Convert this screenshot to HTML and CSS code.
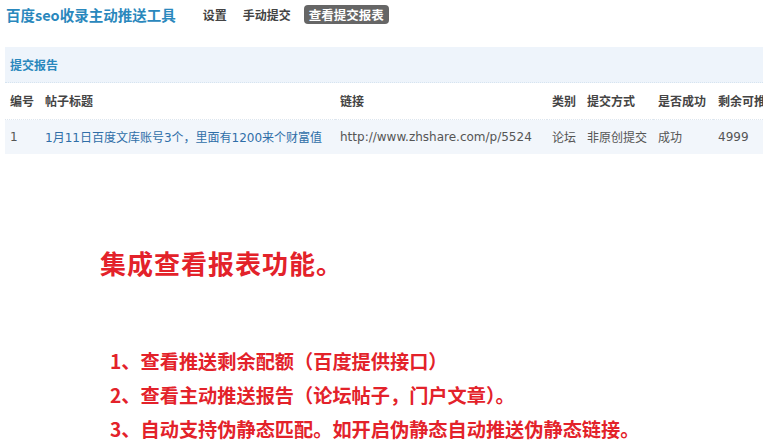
FILE: index.html
```html
<!DOCTYPE html>
<html lang="zh-CN">
<head>
    <meta charset="UTF-8">
    <title>百度seo收录主动推送工具</title>
    <link rel="stylesheet" href="styles.css">
</head>
<body>
    <div class="topbar">
        <span class="app-title">百度seo收录主动推送工具</span>
        <a class="nav-item">设置</a>
        <a class="nav-item">手动提交</a>
        <a class="nav-item active">查看提交报表</a>
    </div>

    <div class="panel">
        <div class="panel-head">提交报告</div>
        <table class="report">
            <colgroup>
                <col style="width:35px">
                <col style="width:295px">
                <col style="width:212px">
                <col style="width:35px">
                <col style="width:71px">
                <col style="width:60px">
                <col style="width:100px">
            </colgroup>
            <thead>
                <tr>
                    <th>编号</th>
                    <th>帖子标题</th>
                    <th>链接</th>
                    <th>类别</th>
                    <th>提交方式</th>
                    <th>是否成功</th>
                    <th>剩余可推送</th>
                </tr>
            </thead>
            <tbody>
                <tr>
                    <td>1</td>
                    <td><a class="post-link">1月11日百度文库账号3个，里面有1200来个财富值</a></td>
                    <td>http://www.zhshare.com/p/5524</td>
                    <td>论坛</td>
                    <td>非原创提交</td>
                    <td>成功</td>
                    <td>4999</td>
                </tr>
            </tbody>
        </table>
    </div>

    <div class="notes">
        <h2>集成查看报表功能。</h2>
        <ol class="features">
            <li>1、查看推送剩余配额（百度提供接口）</li>
            <li>2、查看主动推送报告（论坛帖子，门户文章）。</li>
            <li>3、自动支持伪静态匹配。如开启伪静态自动推送伪静态链接。</li>
        </ol>
    </div>
</body>
</html>
```

FILE: styles.css
```css
body {
    margin: 0;
    padding: 0;
    background-color: #fff;
    color: #444;
    font-family: "DejaVu Sans", "Noto Sans CJK SC", sans-serif;
    font-size: 12px;
    overflow: hidden;
}
.topbar {
    display: flex;
    align-items: center;
    height: 28px;
    padding-left: 6px;
}
.app-title {
    font-family: "Noto Sans CJK SC", sans-serif;
    font-size: 14.5px;
    font-weight: bold;
    color: #2a88bd;
    margin-right: 24px;
}
.nav-item {
    font-family: "Noto Sans CJK SC", sans-serif;
    font-size: 12px;
    font-weight: bold;
    color: #444;
    margin-right: 10px;
    padding: 1px 3px;
    line-height: 17px;
    border-radius: 4px;
}
.nav-item.active {
    background-color: #666;
    color: #fff;
    padding: 1px 5px;
    font-size: 12.5px;
}
.panel {
    margin: 19px 0 0 5px;
    width: 820px;
}
.panel-head {
    height: 36px;
    line-height: 36px;
    padding-left: 5px;
    background-color: #eef4fb;
    border-bottom: 1px dotted #d6e4f0;
    box-sizing: border-box;
    font-family: "Noto Sans CJK SC", sans-serif;
    font-weight: bold;
    color: #2a88bd;
}
.report {
    border-collapse: collapse;
    table-layout: fixed;
    width: 808px;
}
.report th {
    height: 36px;
    padding: 0 0 0 5px;
    text-align: left;
    font-family: "Noto Sans CJK SC", sans-serif;
    font-weight: bold;
    color: #444;
    white-space: nowrap;
    overflow: hidden;
    border-bottom: 1px dotted #dde6ef;
    box-sizing: border-box;
}
.report td {
    height: 34px;
    padding: 0 0 0 5px;
    background-color: #f2f6fb;
    color: #555;
    white-space: nowrap;
    overflow: hidden;
}
.post-link {
    color: #2f6ea8;
}
.notes {
    padding-left: 100px;
    color: #e3222a;
    font-family: "Noto Sans CJK SC", sans-serif;
    font-weight: bold;
}
.notes h2 {
    margin: 93px 0 0 0;
    font-size: 26px;
    letter-spacing: 1px;
    line-height: 32px;
}
.features {
    list-style: none;
    margin: 65px 0 0 10px;
    padding: 0;
    font-size: 19.2px;
    line-height: 34px;
}
```
